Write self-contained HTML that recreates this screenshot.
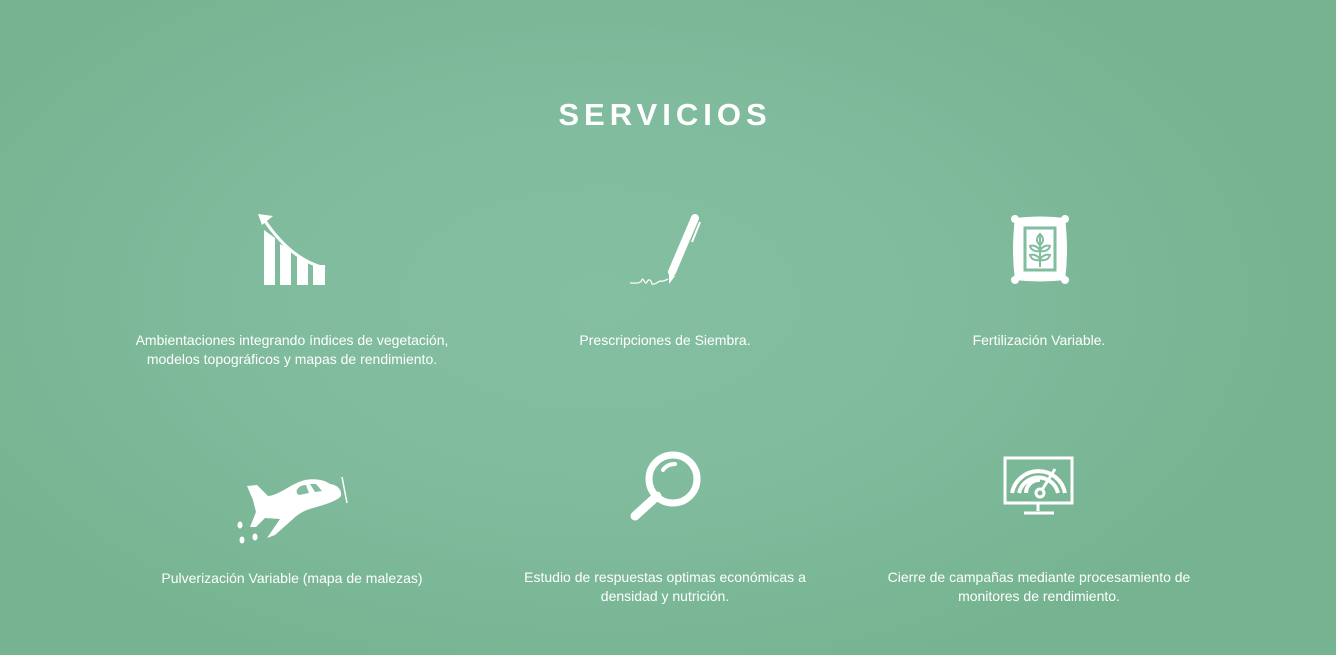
<!DOCTYPE html>
<html><head><style>
html,body{margin:0;padding:0}
body{width:1336px;height:655px;overflow:hidden;position:relative;background:radial-gradient(ellipse 700px 400px at 600px 300px,#85bfa2 0%,#80bb9d 50%,#76b491 100%);font-family:"Liberation Sans",sans-serif;color:#fff}
h1{position:absolute;top:97px;left:0;width:1330px;text-align:center;margin:0;font-size:31px;font-weight:bold;letter-spacing:5px}
.t{position:absolute;width:380px;text-align:center;font-size:14px;line-height:19px}
svg{position:absolute}
</style></head><body>
<h1>SERVICIOS</h1>

<svg style="left:255px;top:212px" width="75" height="76" viewBox="0 0 75 76">
<path d="M9 73V18l11 8v47z M25 73V32l11 6v35z M42 73V44l11 4v25z M58 73V53l12 0v20z" fill="#fff"/>
<path d="M8 6C25 32 45 50 70 56" stroke="#fff" stroke-width="3" fill="none"/>
<path d="M3 2L18 4 7 13z" fill="#fff"/>
</svg>

<svg style="left:628px;top:212px" width="75" height="76" viewBox="0 0 75 76">
<path d="M67 6L44 60" stroke="#fff" stroke-width="8" stroke-linecap="round"/>
<path d="M72 10L64 30" stroke="#fff" stroke-width="2"/>
<path d="M41 62l6 2-6 8z" fill="#fff"/>
<path d="M2 71C8 71 12 72 14 68 15 64 17 74 19 70 21 66 23 68 24 72 27 73 30 70 32 69 35 70 38 68 40 67" stroke="#fff" stroke-width="1.2" fill="none"/>
</svg>

<svg style="left:1005px;top:212px" width="70" height="76" viewBox="0 0 70 76">
<path d="M10 6Q35 3 60 6Q64 38 60 68Q35 71 10 68Q6 38 10 6z" fill="#fff"/>
<circle cx="10" cy="7" r="4" fill="#fff"/><circle cx="60" cy="7" r="4" fill="#fff"/><circle cx="10" cy="68" r="4" fill="#fff"/><circle cx="60" cy="68" r="4" fill="#fff"/>
<rect x="20" y="16" width="30" height="42" fill="none" stroke="#82bd9f" stroke-width="3"/>
<path d="M35 55V24" stroke="#82bd9f" stroke-width="2"/>
<path d="M35 22c-4 4-4 8 0 11 4-3 4-7 0-11z M35 38c-3-4-7-5-10-4 1 4 5 6 10 5z M35 38c3-4 7-5 10-4-1 4-5 6-10 5z M35 47c-3-4-7-5-10-4 1 4 5 6 10 5z M35 47c3-4 7-5 10-4-1 4-5 6-10 5z" fill="none" stroke="#82bd9f" stroke-width="2"/>
</svg>

<svg style="left:220px;top:440px" width="140" height="110" viewBox="0 0 140 110">
<path d="M27 46L37 45 48 56C60 55 70 44 85 40 95 38 105 40 110 44 118 45 122 50 121 56 118 60 108 64 93 68 85 70 78 74 73 79 L55 95 47 98 60 79 45 78 36 87 30 87 36 72 33 60z" fill="#fff"/>
<path d="M77 50c2-4 6-5 9-5l3 8-10 2c-2-1-3-3-2-5z M90 44l6 0 6 7-7 1z" fill="#82bd9f"/>
<path d="M122 37L127 63" stroke="#fff" stroke-width="1.5"/>
<ellipse cx="20" cy="85" rx="2.5" ry="3.5" fill="#fff"/><ellipse cx="22" cy="100" rx="2.5" ry="3.5" fill="#fff"/><ellipse cx="35" cy="97" rx="2.5" ry="3.5" fill="#fff"/>
</svg>

<svg style="left:628px;top:450px" width="75" height="76" viewBox="0 0 75 76">
<circle cx="45" cy="29" r="24" fill="none" stroke="#fff" stroke-width="7"/>
<path d="M35 20q4-6 12-6" stroke="#fff" stroke-width="4" stroke-linecap="round" fill="none"/>
<path d="M29 46L7 66" stroke="#fff" stroke-width="9" stroke-linecap="round"/>
</svg>

<svg style="left:1000px;top:455px" width="78" height="64" viewBox="0 0 78 64">
<rect x="5" y="3" width="67" height="45" fill="none" stroke="#fff" stroke-width="3"/>
<path d="M38 49v7 M24 58h30" stroke="#fff" stroke-width="3"/>
<path d="M12 38a27 27 0 0 1 53 0 M19 38a20 20 0 0 1 39 0 M26 38a13 13 0 0 1 14-13" stroke="#fff" stroke-width="4" fill="none"/>
<circle cx="40" cy="38" r="4" fill="none" stroke="#fff" stroke-width="3"/>
<path d="M42 35L55 14" stroke="#fff" stroke-width="3"/>
</svg>

<div class="t" style="left:102px;top:331px">Ambientaciones integrando índices de vegetación,<br>modelos topográficos y mapas de rendimiento.</div>
<div class="t" style="left:475px;top:331px">Prescripciones de Siembra.</div>
<div class="t" style="left:849px;top:331px">Fertilización Variable.</div>
<div class="t" style="left:102px;top:569px">Pulverización Variable (mapa de malezas)</div>
<div class="t" style="left:495px;top:568px;width:340px">Estudio de respuestas optimas económicas a densidad y nutrición.</div>
<div class="t" style="left:869px;top:568px;width:340px">Cierre de campañas mediante procesamiento de monitores de rendimiento.</div>
</body></html>
